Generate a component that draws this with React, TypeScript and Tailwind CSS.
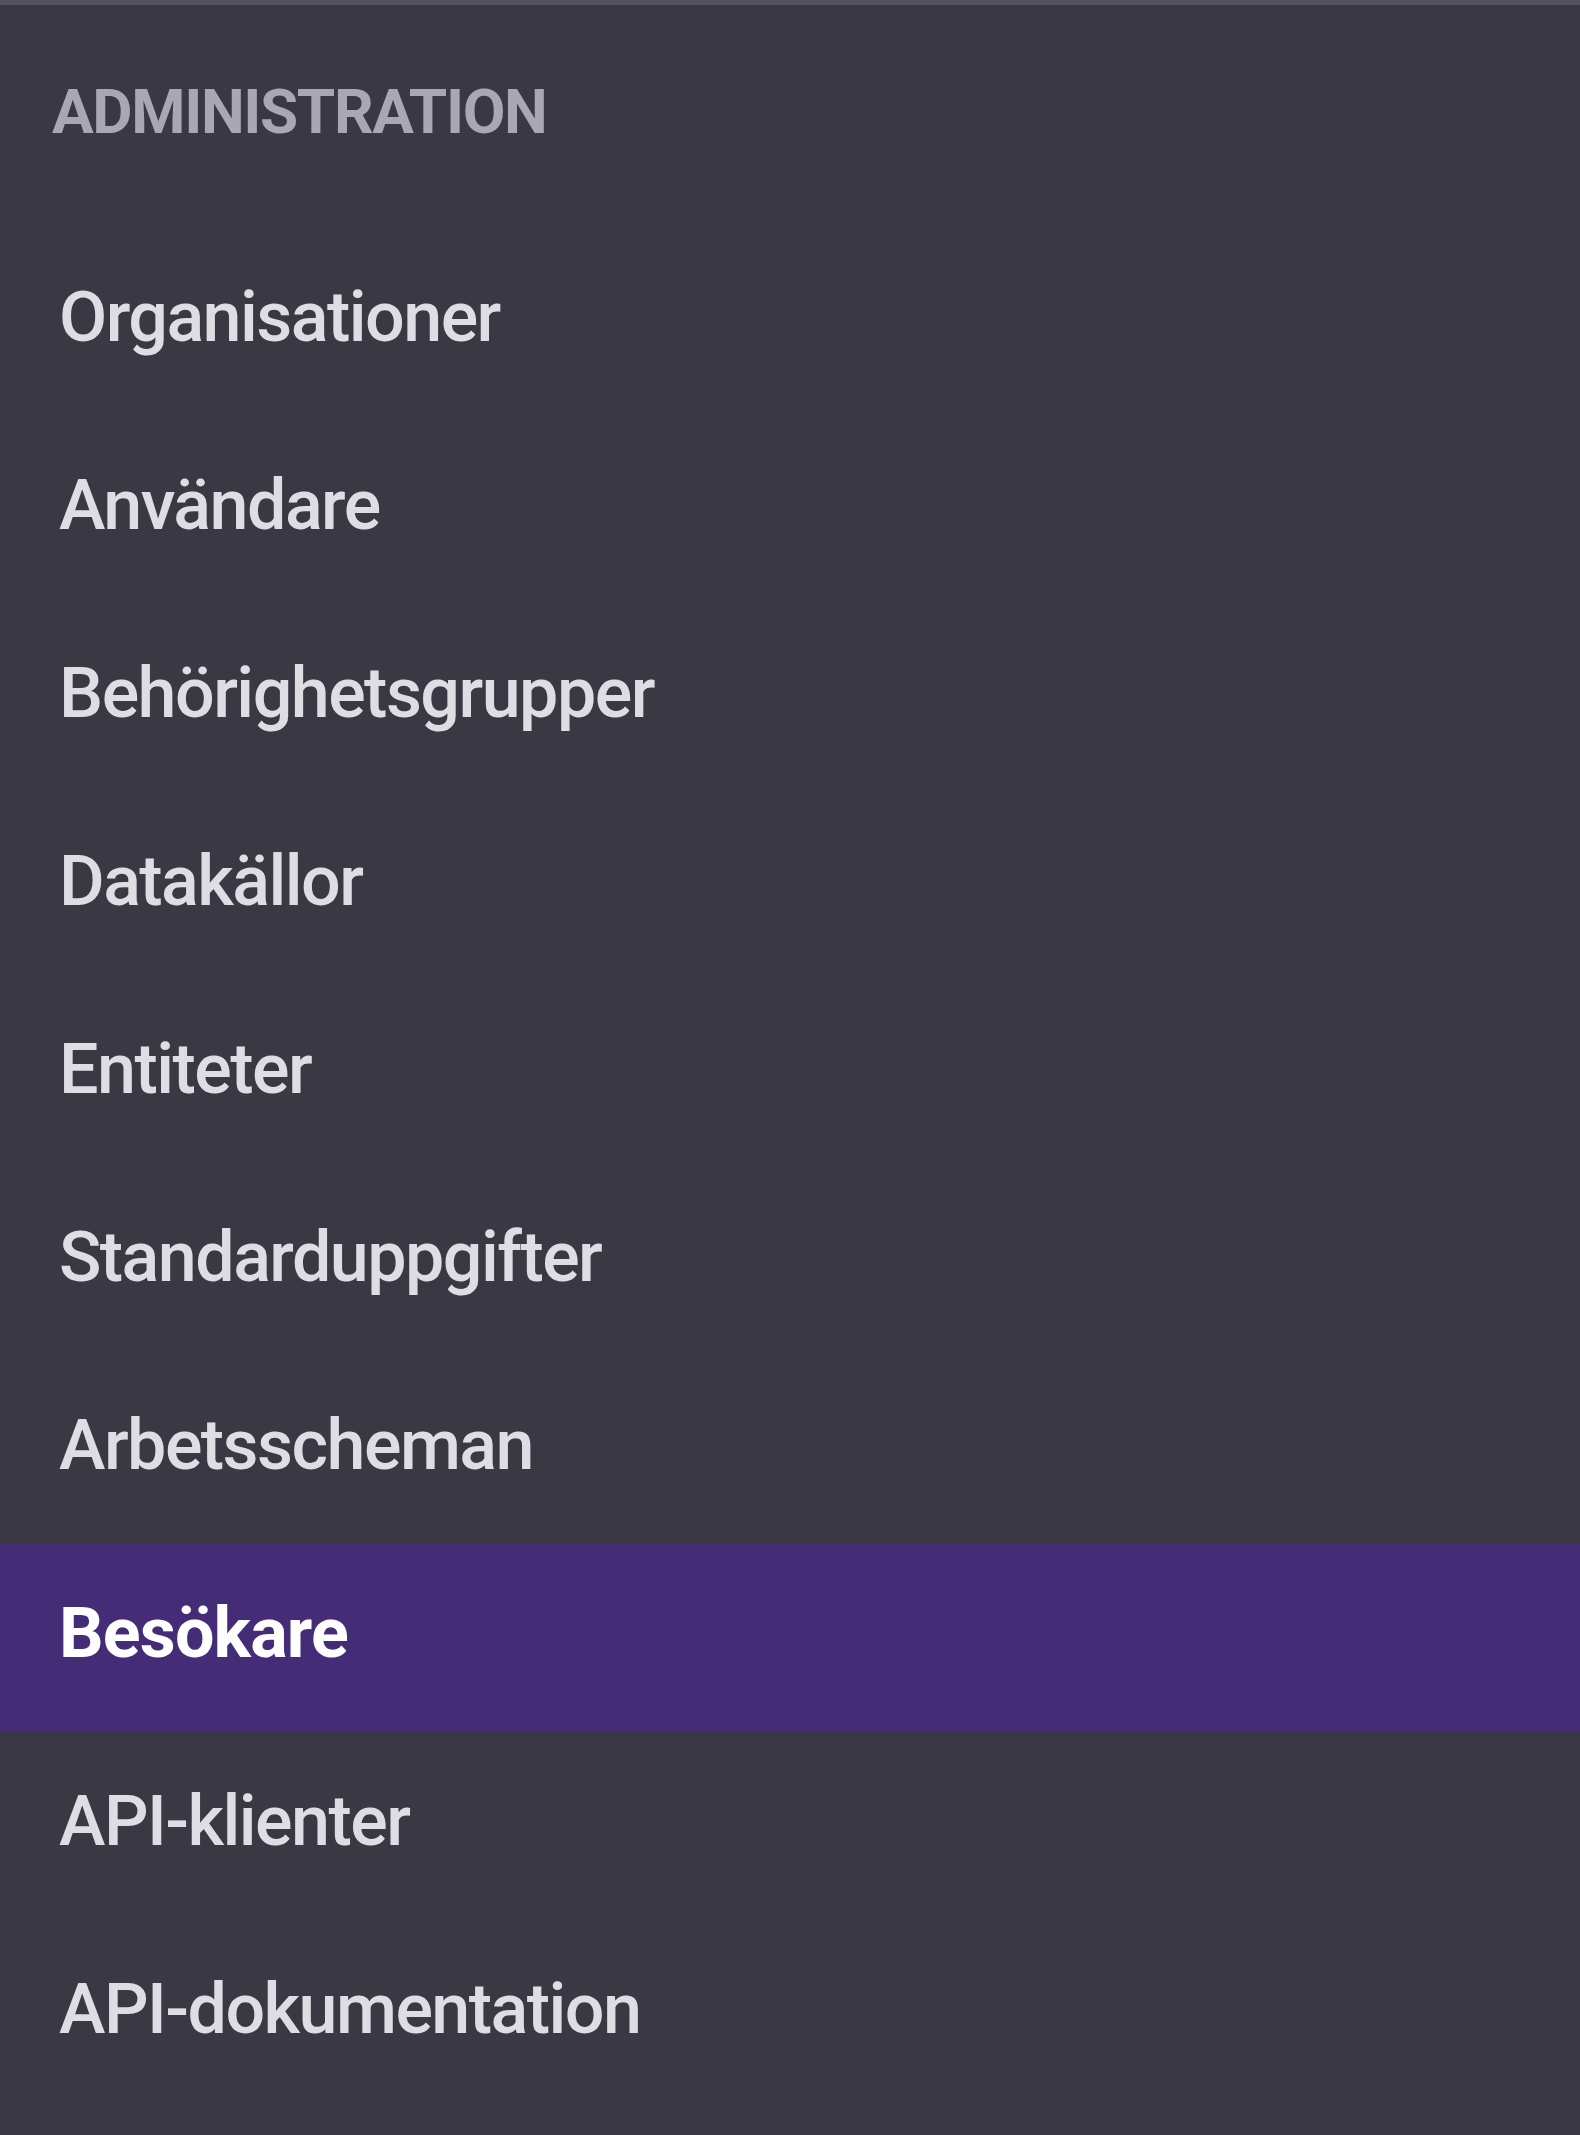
import React from 'react';

const items = [
  'Organisationer',
  'Användare',
  'Behörighetsgrupper',
  'Datakällor',
  'Entiteter',
  'Standarduppgifter',
  'Arbetsscheman',
  'Besökare',
  'API-klienter',
  'API-dokumentation',
];

const active = 'Besökare';

export default function App() {
  return (
    <div
      className="min-h-screen w-full bg-[#3a3843] border-t-[5px] border-[#55535f]"
      style={{ fontFamily: 'Roboto, "Liberation Sans", sans-serif' }}
    >
      {/* Section header */}
      <div className="h-[222px] pt-[76px] pl-[52px]">
        <h2 className="text-[62px] leading-none font-bold text-[#a8a7b4] tracking-[-0.022em]">
          ADMINISTRATION
        </h2>
      </div>

      {/* Nav list */}
      <nav className="flex flex-col">
        {items.map(label => {
          const isActive = label === active;
          return (
            <a
              key={label}
              href="#"
              className={
                isActive
                  ? 'h-[188px] flex items-center pl-[59px] pb-[8px] bg-[#452c77] text-white font-bold text-[70px] leading-none tracking-[-0.012em]'
                  : 'h-[188px] flex items-center pl-[59px] pb-[8px] text-[#dedde3] font-medium text-[70px] leading-none tracking-[-0.022em]'
              }
            >
              {label}
            </a>
          );
        })}
      </nav>
    </div>
  );
}
